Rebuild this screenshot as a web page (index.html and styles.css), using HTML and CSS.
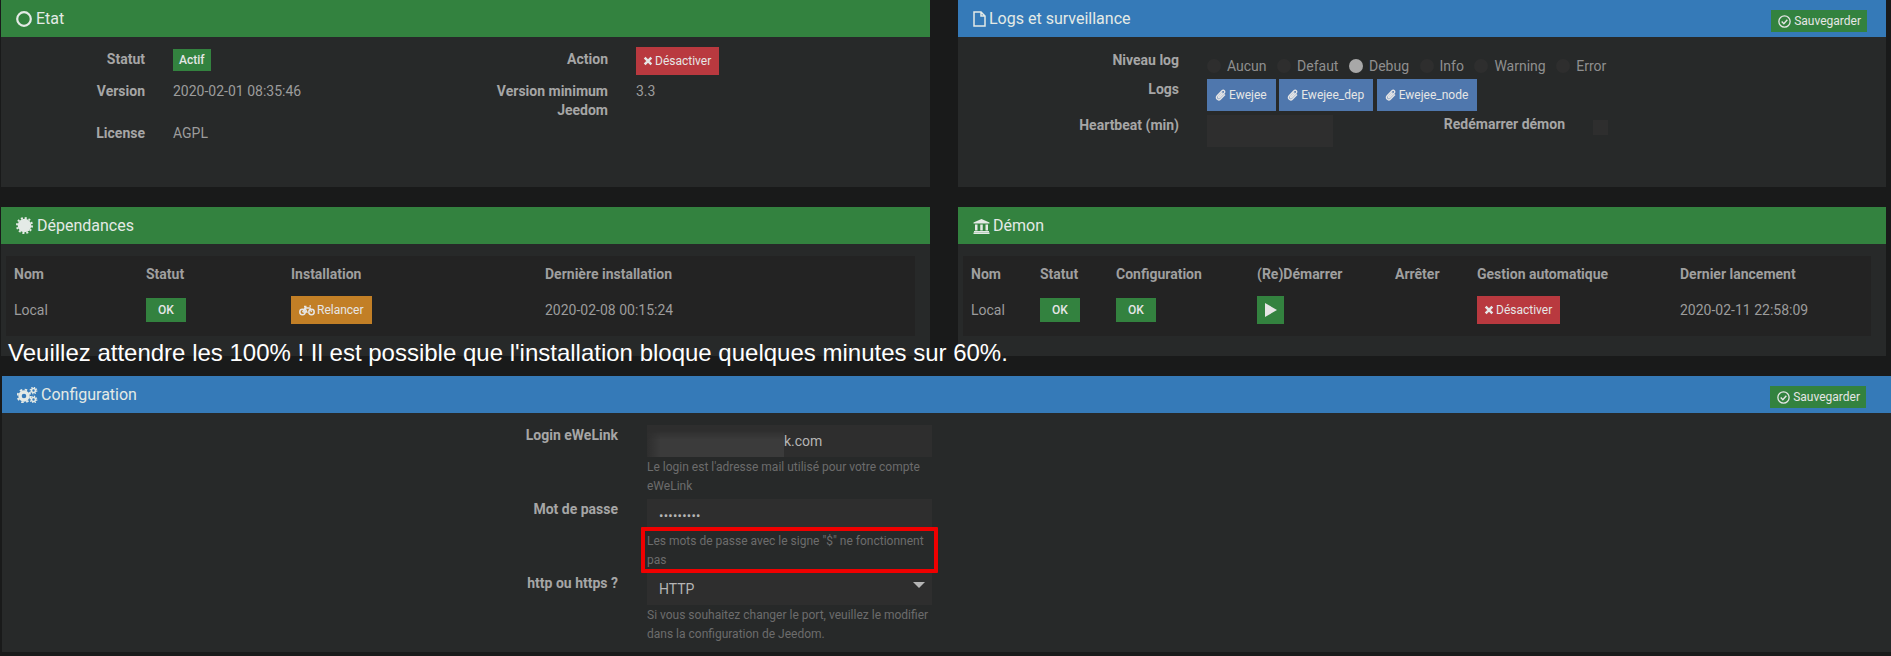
FILE: index.html
```html
<!DOCTYPE html>
<html lang="fr">
<head>
    <meta charset="UTF-8">
    <meta name="viewport" content="width=device-width, initial-scale=1.0">
    <title>Ewejee</title>
    <link rel="stylesheet" href="styles.css">
</head>
<body>
    <div id="container">
        <div class="panels">
            <!-- etat -->
            <section class="panel etat green">
                <h3 class="heading">
                    <svg class="ico" viewBox="0 0 16 16"><circle cx="8" cy="8" r="6.8" fill="none" stroke="currentColor" stroke-width="2.2"/></svg>
                    <span>Etat</span>
                </h3>
                <div class="infos">
                    <div class="lbl">Statut</div>
                    <div class="val"><span class="badge">Actif</span></div>
                    <div class="lbl lbl-wrap">Action</div>
                    <div class="val val-btn">
                        <a class="btn red">
                            <svg class="ico-sm" viewBox="0 0 12 12"><path d="M2 2l8 8M10 2l-8 8" stroke="currentColor" stroke-width="3" fill="none"/></svg>Désactiver
                        </a>
                    </div>
                    <div class="lbl">Version</div>
                    <div class="val">2020-02-01 08:35:46</div>
                    <div class="lbl lbl-wrap">Version minimum Jeedom</div>
                    <div class="val">3.3</div>
                    <div class="lbl">License</div>
                    <div class="val">AGPL</div>
                </div>
            </section>

            <!-- logs -->
            <section class="panel logs blue">
                <h3 class="heading">
                    <svg class="ico ico-file" viewBox="0 0 13 16"><path d="M1 1h7l4 4v10H1zM8 1v4h4" fill="none" stroke="currentColor" stroke-width="1.5"/></svg>
                    <span>Logs et surveillance</span>
                    <a class="btn green-btn save">
                        <svg class="ico-save" viewBox="0 0 12 12"><circle cx="6" cy="6" r="5.2" fill="none" stroke="currentColor" stroke-width="1.2"/><path d="M3.4 6l2 2 3.2-3.6" fill="none" stroke="currentColor" stroke-width="1.3"/></svg>Sauvegarder
                    </a>
                </h3>
                <div class="log-form">
                    <div class="log-row">
                        <div class="lbl">Niveau log</div>
                        <div class="radios">
                            <label class="radio"><i></i>Aucun</label>
                            <label class="radio"><i></i>Defaut</label>
                            <label class="radio on"><i></i>Debug</label>
                            <label class="radio"><i></i>Info</label>
                            <label class="radio"><i></i>Warning</label>
                            <label class="radio"><i></i>Error</label>
                        </div>
                    </div>
                    <div class="log-row">
                        <div class="lbl">Logs</div>
                        <div class="log-btns">
                            <a class="btn steel"><svg class="ico-clip" viewBox="0 0 12 12"><path d="M10 5.5L5.6 10c-1 1-2.6 1-3.5.1s-.9-2.4.1-3.4L7 1.8c.7-.7 1.7-.7 2.3-.1s.6 1.6-.1 2.3L4.7 8.6c-.4.4-.9.4-1.2.1s-.3-.8.1-1.2L7.5 3.5" fill="none" stroke="currentColor" stroke-width="1.4"/></svg>Ewejee</a>
                            <a class="btn steel"><svg class="ico-clip" viewBox="0 0 12 12"><path d="M10 5.5L5.6 10c-1 1-2.6 1-3.5.1s-.9-2.4.1-3.4L7 1.8c.7-.7 1.7-.7 2.3-.1s.6 1.6-.1 2.3L4.7 8.6c-.4.4-.9.4-1.2.1s-.3-.8.1-1.2L7.5 3.5" fill="none" stroke="currentColor" stroke-width="1.4"/></svg>Ewejee_dep</a>
                            <a class="btn steel"><svg class="ico-clip" viewBox="0 0 12 12"><path d="M10 5.5L5.6 10c-1 1-2.6 1-3.5.1s-.9-2.4.1-3.4L7 1.8c.7-.7 1.7-.7 2.3-.1s.6 1.6-.1 2.3L4.7 8.6c-.4.4-.9.4-1.2.1s-.3-.8.1-1.2L7.5 3.5" fill="none" stroke="currentColor" stroke-width="1.4"/></svg>Ewejee_node</a>
                        </div>
                    </div>
                    <div class="log-row">
                        <div class="lbl">Heartbeat (min)</div>
                        <div class="beat"></div>
                        <div class="lbl lbl-restart">Redémarrer démon</div>
                        <div class="check"></div>
                    </div>
                </div>
            </section>

            <!-- dependances -->
            <section class="panel deps green">
                <h3 class="heading">
                    <svg class="ico ico-cert" viewBox="0 0 18 18"><circle cx="9" cy="9" r="7.2" fill="currentColor"/><circle cx="9" cy="9" r="8" fill="none" stroke="currentColor" stroke-width="2" stroke-dasharray="2.2 1.99"/></svg>
                    <span>Dépendances</span>
                </h3>
                <div class="table-wrap">
                    <table class="deps-table">
                        <thead>
                            <tr><th>Nom</th><th>Statut</th><th>Installation</th><th>Dernière installation</th></tr>
                        </thead>
                        <tbody>
                            <tr>
                                <td>Local</td>
                                <td><span class="ok">OK</span></td>
                                <td>
                                    <a class="btn orange">
                                        <svg class="ico-bike" viewBox="0 0 16 11"><circle cx="3.5" cy="7" r="2.7" fill="none" stroke="currentColor" stroke-width="1.5"/><circle cx="12.5" cy="7" r="2.7" fill="none" stroke="currentColor" stroke-width="1.5"/><path d="M3.5 7L6 3h5l1.5 4M6 3l2 4H3.5M5 1.5h2.5M10.5 1H12" fill="none" stroke="currentColor" stroke-width="1.3"/></svg>Relancer
                                    </a>
                                </td>
                                <td>2020-02-08 00:15:24</td>
                            </tr>
                        </tbody>
                    </table>
                </div>
            </section>

            <!-- demon -->
            <section class="panel demon green">
                <h3 class="heading">
                    <svg class="ico ico-bank" viewBox="0 0 17 16"><path d="M8.5 1L16.5 4.5V5.5H.5V4.5zM2 6.5h2.5v6H2zM7.25 6.5h2.5v6h-2.5zM12.5 6.5H15v6h-2.5zM1 13h15v1.2H1zM.5 14.5h16V16H.5z" fill="currentColor"/></svg>
                    <span>Démon</span>
                </h3>
                <div class="table-wrap">
                    <table class="demon-table">
                        <thead>
                            <tr><th>Nom</th><th>Statut</th><th>Configuration</th><th>(Re)Démarrer</th><th>Arrêter</th><th>Gestion automatique</th><th>Dernier lancement</th></tr>
                        </thead>
                        <tbody>
                            <tr>
                                <td>Local</td>
                                <td><span class="ok">OK</span></td>
                                <td><span class="ok">OK</span></td>
                                <td><a class="btn green-btn play"><svg viewBox="0 0 12 14" width="12" height="14"><path d="M0 0l12 7-12 7z" fill="currentColor"/></svg></a></td>
                                <td></td>
                                <td>
                                    <a class="btn red">
                                        <svg class="ico-sm" viewBox="0 0 12 12"><path d="M2 2l8 8M10 2l-8 8" stroke="currentColor" stroke-width="3" fill="none"/></svg>Désactiver
                                    </a>
                                </td>
                                <td>2020-02-11 22:58:09</td>
                            </tr>
                        </tbody>
                    </table>
                </div>
            </section>
        </div>

        <!-- configuration -->
        <section class="panel config blue">
            <h3 class="heading">
                <svg class="ico ico-cogs" viewBox="0 0 21 16"><circle cx="7" cy="9" r="4" fill="none" stroke="currentColor" stroke-width="3.4"/><circle cx="7" cy="9" r="6.4" fill="none" stroke="currentColor" stroke-width="1.8" stroke-dasharray="2.5 2.52"/><circle cx="16.5" cy="3.5" r="2" fill="none" stroke="currentColor" stroke-width="1.6"/><circle cx="16.5" cy="3.5" r="3.3" fill="none" stroke="currentColor" stroke-width="1.2" stroke-dasharray="1.3 1.29"/><circle cx="16.5" cy="12.5" r="2" fill="none" stroke="currentColor" stroke-width="1.6"/><circle cx="16.5" cy="12.5" r="3.3" fill="none" stroke="currentColor" stroke-width="1.2" stroke-dasharray="1.3 1.29"/></svg>
                <span>Configuration</span>
                <a class="btn green-btn save">
                    <svg class="ico-save" viewBox="0 0 12 12"><circle cx="6" cy="6" r="5.2" fill="none" stroke="currentColor" stroke-width="1.2"/><path d="M3.4 6l2 2 3.2-3.6" fill="none" stroke="currentColor" stroke-width="1.3"/></svg>Sauvegarder
                </a>
            </h3>
            <div class="conf-form">
                <div class="lbl">Login eWeLink</div>
                <div class="field">
                    <div class="input"><span class="blur"></span>k.com</div>
                    <p class="help">Le login est l'adresse mail utilisé pour votre compte eWeLink</p>
                </div>
                <div class="lbl">Mot de passe</div>
                <div class="field">
                    <div class="input"><span class="dots">•••••••••</span></div>
                    <p class="help flagged">Les mots de passe avec le signe "$" ne fonctionnent pas<span class="redbox"></span></p>
                </div>
                <div class="lbl">http ou https ?</div>
                <div class="field">
                    <div class="input select">HTTP</div>
                    <p class="help">Si vous souhaitez changer le port, veuillez le modifier dans la configuration de Jeedom.</p>
                </div>
            </div>
        </section>
    </div>

    <p class="notice">Veuillez attendre les 100% ! Il est possible que l'installation bloque quelques minutes sur 60%.</p>
</body>
</html>
```

FILE: styles.css
```css
*{
    box-sizing: border-box;
}
body{
    margin: 0;
    height: 656px;
    overflow: hidden;
    background-color: #191a1a;
    color: #9c9c9c;
    font-family: Roboto, sans-serif;
    font-size: 14px;
    line-height: 19px;
    position: relative;
}
.panels{
    display: grid;
    grid-template-columns: 929px 928px;
    grid-template-rows: 187px 149px;
    column-gap: 28px;
    row-gap: 20px;
    padding-left: 1px;
}
.panel{
    background-color: #272929;
}
.heading{
    height: 37px;
    margin: 0;
    padding: 0 19px 0 15px;
    display: flex;
    align-items: center;
    gap: 3px;
    color: #e4eae6;
    font-size: 16px;
    font-weight: 400;
}
.etat .heading,
.deps .heading{
    gap: 4px;
}
.green .heading{
    background-color: #33823f;
}
.blue .heading{
    background-color: #357ab8;
}
.config .heading{
    padding-right: 25px;
}
.ico{
    width: 16px;
    height: 16px;
    flex: none;
}
.ico-file{
    width: 13px;
}
.ico-cert{
    width: 17px;
    height: 17px;
}
.ico-bank{
    width: 17px;
}
.ico-cogs{
    width: 21px;
}
.ico-sm{
    width: 10px;
    height: 10px;
    margin-right: 2px;
    flex: none;
}
.ico-clip{
    width: 12px;
    height: 12px;
    margin-right: 2px;
    flex: none;
}
.ico-save{
    width: 13px;
    height: 13px;
    margin-right: 3px;
    flex: none;
}
.ico-bike{
    width: 16px;
    height: 11px;
    margin-right: 2px;
    flex: none;
}
.lbl{
    font-weight: 700;
    color: #a6a6a6;
    text-align: right;
    padding-top: 3px;
}

/* boutons */
.btn{
    display: inline-flex;
    align-items: center;
    height: 28px;
    padding: 0 8px 0 7px;
    color: #e6e6e6;
    font-size: 12px;
}
.red{
    background-color: #b9393f;
}
.green-btn{
    background-color: #33823f;
}
.steel{
    background-color: #4f77ad;
    height: 32px;
    padding: 0 9px 0 8px;
}
.orange{
    background-color: #c27f26;
    padding: 0 8px;
}
.save{
    height: 22px;
    margin: 5px 0 0 auto;
    padding: 0 6px 0 7px;
}
.badge{
    display: inline-block;
    height: 22px;
    margin-top: -2px;
    padding: 2px 6px 0;
    background-color: #33823f;
    color: #e6e6e6;
    font-size: 12px;
    font-weight: 500;
}
.ok{
    display: inline-flex;
    align-items: center;
    justify-content: center;
    width: 40px;
    height: 24px;
    background-color: #33823f;
    color: #e6e6e6;
    font-size: 12px;
    font-weight: 500;
}

/* etat */
.infos{
    display: grid;
    grid-template-columns: 144px 290px 173px 1fr;
    grid-template-rows: 32px 42px auto;
    padding-top: 10px;
}
.lbl-wrap{
    padding-left: 50px;
}
.val{
    padding: 3px 0 0 28px;
}
.val-btn{
    padding-top: 0;
}

/* logs */
.log-form{
    padding-top: 10px;
}
.log-row{
    display: flex;
}
.log-row:nth-child(1){
    height: 29px;
}
.log-row:nth-child(2){
    height: 36px;
}
.log-row > .lbl:first-child{
    width: 221px;
    margin-right: 28px;
    padding-top: 4px;
    flex: none;
}
.radios{
    display: flex;
    gap: 10.5px;
    padding-top: 9px;
}
.radio{
    display: flex;
    align-items: center;
    gap: 6px;
    color: #8f8f8f;
}
.radio i{
    width: 14px;
    height: 14px;
    border-radius: 50%;
    background-color: #2e2e2e;
}
.radio.on i{
    background-color: #a8a8a8;
}
.log-btns{
    display: flex;
    gap: 3.5px;
    padding-top: 3px;
}
.beat{
    width: 126px;
    height: 32px;
    margin-top: 3px;
    background-color: #2e2e2e;
}
.lbl-restart{
    width: 232px;
    padding-top: 3px;
    margin-right: 28px;
}
.check{
    width: 15px;
    height: 15px;
    margin-top: 8px;
    background-color: #2e2e2e;
}

/* tableaux */
.table-wrap{
    margin: 12px 15px 0 5px;
    padding-bottom: 8px;
    background-color: #232323;
}
.deps-table,
.demon-table{
    width: 100%;
    border-collapse: collapse;
    table-layout: fixed;
}
th{
    height: 36px;
    padding: 0;
    text-align: left;
    color: #9f9f9f;
    font-weight: 700;
}
td{
    height: 36px;
    padding: 0;
    vertical-align: middle;
}
td .btn,
td .ok{
    vertical-align: middle;
}
th:first-child,
td:first-child{
    padding-left: 8px;
}
.deps-table th:nth-child(1){
    width: 140px;
}
.deps-table th:nth-child(2){
    width: 145px;
}
.deps-table th:nth-child(3){
    width: 254px;
}
.demon-table th:nth-child(1){
    width: 77px;
}
.demon-table th:nth-child(2){
    width: 76px;
}
.demon-table th:nth-child(3){
    width: 141px;
}
.demon-table th:nth-child(4){
    width: 138px;
}
.demon-table th:nth-child(5){
    width: 82px;
}
.demon-table th:nth-child(6){
    width: 203px;
}
.play{
    width: 27px;
    padding: 0;
    justify-content: center;
    color: #e6e6e6;
}

/* configuration */
.config{
    margin: 20px 0 0 2px;
    height: 276px;
}
.conf-form{
    display: grid;
    grid-template-columns: 616px 285px;
    grid-auto-rows: 74px;
    column-gap: 29px;
    padding-top: 12px;
}
.conf-form .lbl{
    padding-top: 1px;
}
.input{
    display: flex;
    align-items: center;
    height: 32px;
    padding-left: 12px;
    background-color: #2e2e2e;
    color: #b5b5b5;
    font-size: 14px;
    overflow: hidden;
}
.blur{
    width: 137px;
    height: 27px;
    margin: 5px 0 0 -12px;
    background: linear-gradient(90deg, #2e2e2e, #3b3b3b 10%);
    mask-image: linear-gradient(to bottom, transparent, #000 35%);
    flex: none;
}
.dots{
    font-size: 13px;
    letter-spacing: 0.25px;
}
.select{
    position: relative;
}
.select::after{
    content: "";
    position: absolute;
    right: 7px;
    top: 9px;
    border-left: 6px solid transparent;
    border-right: 6px solid transparent;
    border-top: 6px solid #b5b5b5;
}
.help{
    margin: 1px 0 0;
    color: #6c6c6c;
    font-size: 12px;
    line-height: 19px;
}
.flagged{
    position: relative;
}
.redbox{
    position: absolute;
    left: -6px;
    right: -6px;
    top: -5px;
    bottom: -3px;
    border: 4px solid #f00000;
    border-radius: 1px;
}

/* texte colle par dessus la capture */
.notice{
    position: absolute;
    left: 8px;
    top: 338px;
    margin: 0;
    color: #fff;
    font-family: "Liberation Sans", Arial, sans-serif;
    font-size: 24px;
    line-height: 30px;
    white-space: nowrap;
}
```
